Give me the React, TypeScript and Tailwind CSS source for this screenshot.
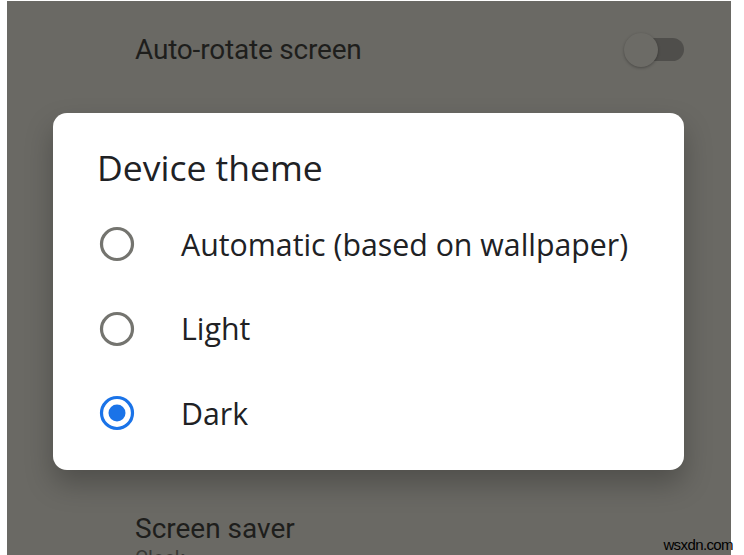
import React from "react";

type Option = { id: string; label: string };

const options: Option[] = [
  { id: "auto", label: "Automatic (based on wallpaper)" },
  { id: "light", label: "Light" },
  { id: "dark", label: "Dark" },
];

function Radio({ checked }: { checked: boolean }) {
  return (
    <svg width="36" height="36" viewBox="0 0 36 36" className="shrink-0">
      <circle
        cx="18"
        cy="18"
        r="15.5"
        fill="none"
        stroke={checked ? "#1a73e8" : "#74746f"}
        strokeWidth="3.2"
      />
      {checked && <circle cx="18" cy="18" r="8.5" fill="#1a73e8" />}
    </svg>
  );
}

export default function App() {
  const selected = "dark";

  return (
    <div
      className="relative w-[744px] h-[555px] overflow-hidden bg-white pl-[7px] pr-[13px] pt-[1px]"
      style={{ fontFamily: "Roboto, 'Liberation Sans', sans-serif" }}
    >
      {/* dimmed settings list */}
      <div className="flex h-full flex-col bg-[#6a6964]">
        <div className="flex h-[98px] items-center justify-between pl-[128px] pr-[47px]">
          <span className="text-[28px] tracking-[-0.2px] text-[#1e1e1c]">Auto-rotate screen</span>
          <div className="relative h-[34px] w-[60px]">
            <div className="absolute right-0 top-[5px] h-[23px] w-[42px] rounded-full bg-[#4f4e4b]" />
            <div className="absolute left-0 top-0 h-[34px] w-[34px] rounded-full bg-[#6c6b66] shadow-[0_1px_3px_rgba(0,0,0,0.3)]" />
          </div>
        </div>
        <div className="flex-1" />
        <div className="flex flex-col pl-[128px]">
          <span className="text-[28px] leading-[32px] text-[#1e1e1c]">Screen saver</span>
          <span className="h-[10px] overflow-hidden text-[20px] leading-[26px] text-[#3a3936]">Clock</span>
        </div>
      </div>

      {/* dialog */}
      <div
        className="absolute left-[53px] top-[113px] h-[357px] w-[631px] rounded-[14px] bg-white shadow-[0_14px_28px_rgba(0,0,0,0.25)]"
        style={{ fontFamily: "'Open Sans', Roboto, sans-serif" }}
      >
        <div className="pl-[44px] pt-[33px] text-[35.5px] font-medium leading-[42px] text-[#202124]">
          Device theme
        </div>
        <div className="mt-[14px] flex flex-col">
          {options.map((o) => (
            <div key={o.id} className="flex h-[84.5px] items-center pl-[46px]">
              <Radio checked={o.id === selected} />
              <span className="ml-[46px] text-[30.3px] text-[#202124]">{o.label}</span>
            </div>
          ))}
        </div>
      </div>

      <span
        className="absolute right-[11px] top-[534px] text-[15px] tracking-[-0.6px] text-black"
        style={{ fontFamily: "'Liberation Sans', sans-serif" }}
      >
        wsxdn.com
      </span>
    </div>
  );
}
